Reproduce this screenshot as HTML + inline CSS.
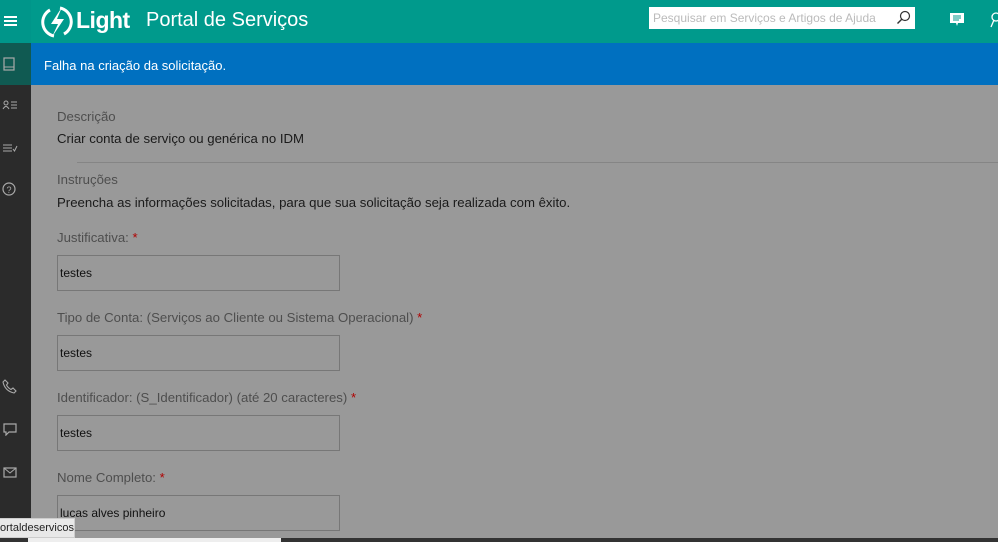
<!DOCTYPE html>
<html><head><meta charset="utf-8"><style>
*{margin:0;padding:0;box-sizing:border-box}
body{width:998px;height:542px;overflow:hidden;background:#999;font-family:"Liberation Sans",sans-serif;position:relative}
.hdr{position:absolute;left:0;top:0;width:998px;height:43px;background:#009a8c}
.ham{position:absolute;left:0;top:0;width:31px;height:43px;background:#00968a}
.ham i{position:absolute;left:4px;width:13px;height:2px;background:#fff}
.side{position:absolute;left:0;top:43px;width:31px;height:499px;background:#2b2b2b}
.side .top{position:absolute;left:0;top:0;width:31px;height:42px;background:#105a52}
.ban{position:absolute;left:31px;top:43px;width:967px;height:42px;background:#0070c0;color:#fff;font-size:13px;padding:15px 0 0 13px}
.c{position:absolute;left:57px;font-size:13.2px}
.lbl{color:#4e4e4e}
.val{color:#1a1a1a}
.st{color:#b00000}
.inp{position:absolute;left:57px;width:283px;height:36px;border:1px solid #777;font-size:12px;color:#111;padding:10px 0 0 2px}
.ic{position:absolute;color:#aaa;font-size:14px}
</style></head><body>
<div class="hdr">
<div class="ham"><i style="top:16px"></i><i style="top:20px"></i><i style="top:24px"></i></div>
<svg style="position:absolute;left:40px;top:5px" width="34" height="34" viewBox="0 0 34 34"><path d="M10 5 A14 14 0 0 0 14 31 M24 29 A14 14 0 0 0 20 3" fill="none" stroke="#fff" stroke-width="3"/><path d="M22 2 L11 19 H18 L12 32 L24 14 H17 Z" fill="#fff"/></svg>
<div style="position:absolute;left:76px;top:7px;color:#fff;font-size:23px;font-weight:bold;letter-spacing:-0.5px">Light</div>
<div style="position:absolute;left:146px;top:9px;color:#fff;font-size:20px">Portal de Serviços</div>
<div style="position:absolute;left:649px;top:7px;width:266px;height:22px;background:#fff;font-size:12px;color:#bbb;padding:4px 0 0 4px">Pesquisar em Serviços e Artigos de Ajuda
<svg style="position:absolute;right:4px;top:3px" width="15" height="15" viewBox="0 0 15 15"><circle cx="9" cy="6" r="4.5" fill="none" stroke="#333" stroke-width="1.2"/><path d="M6 9 L1.5 13.5" stroke="#333" stroke-width="1.4"/></svg></div>
<svg style="position:absolute;left:950px;top:13px" width="14" height="14" viewBox="0 0 14 14"><path d="M0 0H14V10H8L7 13L6 10H0Z" fill="#fff"/><path d="M3 3H11M3 5H11M3 7H9" stroke="#009a8c" stroke-width="1"/></svg>
<svg style="position:absolute;left:990px;top:12px" width="10" height="18" viewBox="0 0 10 18"><circle cx="6" cy="5" r="4" fill="none" stroke="#fff" stroke-width="1.3"/><path d="M4 8 L1 15" stroke="#fff" stroke-width="1.3"/></svg>
</div>
<div class="side"><div class="top"></div>
<svg style="position:absolute;left:3px;top:14px" width="12" height="14" viewBox="0 0 12 14"><rect x="1" y="1" width="10" height="12" fill="none" stroke="#aaa" stroke-width="1.2"/><path d="M1 10H11" stroke="#aaa"/></svg>
<svg style="position:absolute;left:2px;top:57px" width="16" height="10"><circle cx="4" cy="3" r="2" fill="none" stroke="#aaa"/><path d="M1 9 Q4 4 7 9 M9 2H15M9 5H15M9 8H15" fill="none" stroke="#aaa"/></svg>
<svg style="position:absolute;left:2px;top:100px" width="16" height="10"><path d="M1 2H10M1 5H10M1 8H10M11 6L12.5 8L15 3" fill="none" stroke="#aaa"/></svg>
<svg style="position:absolute;left:2px;top:139px" width="14" height="14"><circle cx="7" cy="7" r="6" fill="none" stroke="#aaa" stroke-width="1.2"/><text x="7" y="11" font-size="9" fill="#aaa" text-anchor="middle" font-family="Liberation Sans">?</text></svg>
<svg style="position:absolute;left:2px;top:336px" width="15" height="15"><path d="M3 1 L6 4 L4.5 6 Q6 9 9 10.5 L11 9 L14 12 L12 14 Q3 12 1 3Z" fill="none" stroke="#aaa" stroke-width="1.1"/></svg>
<svg style="position:absolute;left:3px;top:380px" width="14" height="13"><path d="M1 1H13V9H6L3 12V9H1Z" fill="none" stroke="#aaa" stroke-width="1.2"/></svg>
<svg style="position:absolute;left:3px;top:424px" width="14" height="11"><rect x="1" y="1" width="12" height="9" fill="none" stroke="#aaa" stroke-width="1.2"/><path d="M1 1L7 6L13 1" fill="none" stroke="#aaa"/></svg>
</div>
<div class="ban">Falha na criação da solicitação.</div>
<div class="c lbl" style="top:109px">Descrição</div>
<div class="c val" style="top:131px">Criar conta de serviço ou genérica no IDM</div>
<div style="position:absolute;left:77px;top:162px;width:921px;height:1px;background:#858585"></div>
<div class="c lbl" style="top:172px">Instruções</div>
<div class="c val" style="top:195px">Preencha as informações solicitadas, para que sua solicitação seja realizada com êxito.</div>
<div class="c lbl" style="top:230px">Justificativa: <span class="st">*</span></div>
<div class="inp" style="top:255px">testes</div>
<div class="c lbl" style="top:310px">Tipo de Conta: (Serviços ao Cliente ou Sistema Operacional) <span class="st">*</span></div>
<div class="inp" style="top:335px">testes</div>
<div class="c lbl" style="top:390px">Identificador: (S_Identificador) (até 20 caracteres) <span class="st">*</span></div>
<div class="inp" style="top:415px">testes</div>
<div class="c lbl" style="top:470px">Nome Completo: <span class="st">*</span></div>
<div class="inp" style="top:495px">lucas alves pinheiro</div>
<div style="position:absolute;left:0;top:538px;width:998px;height:4px;background:#333"></div>
<div style="position:absolute;left:28px;top:538px;width:253px;height:4px;background:#eee"></div>
<div style="position:absolute;left:0;top:518px;width:75px;height:20px;background:#e8e8e8;border:1px solid #ccc;border-left:0;font-size:11px;color:#222;padding:3px 0 0 0;white-space:nowrap;overflow:hidden">ortaldeservicos</div>
</body></html>
